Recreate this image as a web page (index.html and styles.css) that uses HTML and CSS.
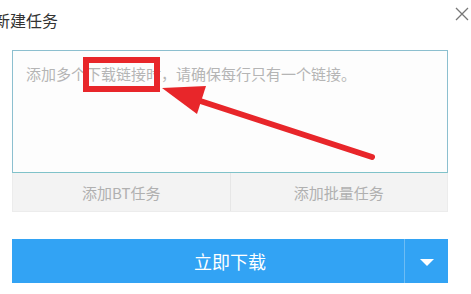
FILE: index.html
```html
<!DOCTYPE html>
<html lang="zh">
<head>
<meta charset="utf-8">
<title>新建任务</title>
<link rel="stylesheet" href="styles.css">
</head>
<body>
<div class="dialog">
  <div class="header">
    <span class="title">新建任务</span>
    <svg class="close" width="16" height="14" viewBox="0 0 16 14"><path d="M2 1 L14 13 M14 1 L2 13" stroke="#777" stroke-width="1.3" fill="none"/></svg>
  </div>
  <div class="input">
    <span class="placeholder">添加多个下载链接时，请确保每行只有一个链接。</span>
  </div>
  <div class="tabs">
    <div class="tab">添加BT任务</div>
    <div class="tab">添加批量任务</div>
  </div>
  <div class="download">
    <div class="main">立即下载</div>
    <div class="drop"><span class="tri"></span></div>
  </div>
</div>
<div class="mark"></div>
<svg class="arrow" width="471" height="294" viewBox="0 0 471 294">
  <line x1="188" y1="97" x2="372" y2="157" stroke="#e8262a" stroke-width="6" stroke-linecap="round"/>
  <polygon points="162,88 206,86 197,114" fill="#e8262a"/>
</svg>
</body>
</html>
```
FILE: styles.css
```css
html, body {
  margin: 0;
  padding: 0;
  background: #ffffff;
}
body {
  font-family: "Noto Sans CJK SC", "Noto Sans", sans-serif;
  width: 471px;
  height: 294px;
  overflow: hidden;
  position: relative;
}
.dialog {
  padding: 0 23px 0 12px;
  display: flex;
  flex-direction: column;
}
.header {
  height: 40px;
  display: flex;
  align-items: center;
  justify-content: space-between;
  margin-left: -15px;
  margin-right: -23px;
}
.title {
  font-size: 16px;
  color: #333;
  line-height: 20px;
  margin-left: -3px;
}
.close {
  margin-right: 1px;
  margin-top: -13px;
}
.input {
  margin-top: 10px;
  height: 121px;
  border: 1px solid #8cbfcf;
  border-bottom-color: #7fc2c9;
  background: #fdfdfd;
  padding: 10px 13px;
  box-sizing: border-box;
  height: 123px;
}
.placeholder {
  font-size: 15px;
  line-height: 22px;
  color: #b5b5b5;
  white-space: nowrap;
}
.tabs {
  display: flex;
  height: 39px;
  background: #f3f3f3;
  border: 1px solid #ececec;
  border-top: none;
  box-sizing: border-box;
}
.tab {
  flex: 1;
  display: flex;
  align-items: center;
  justify-content: center;
  font-size: 15px;
  color: #b0b0b0;
}
.tab + .tab {
  border-left: 1px solid #e6e6e6;
}
.download {
  margin-top: 27px;
  height: 44px;
  display: flex;
  background: #32a3f4;
}
.main {
  flex: 1;
  display: flex;
  align-items: center;
  justify-content: center;
  padding-left: 44px;
  color: #ffffff;
  font-size: 18px;
}
.drop {
  width: 43px;
  border-left: 1px solid #6cbcf4;
  display: flex;
  align-items: center;
  justify-content: center;
}
.tri {
  width: 0;
  height: 0;
  border-left: 7px solid transparent;
  border-right: 7px solid transparent;
  border-top: 7px solid #ffffff;
  margin-top: 2px;
}
.mark {
  position: absolute;
  left: 83px;
  top: 57px;
  width: 77px;
  height: 35px;
  box-sizing: border-box;
  border: 6px solid #e8262a;
}
.arrow {
  position: absolute;
  left: 0;
  top: 0;
}
```
